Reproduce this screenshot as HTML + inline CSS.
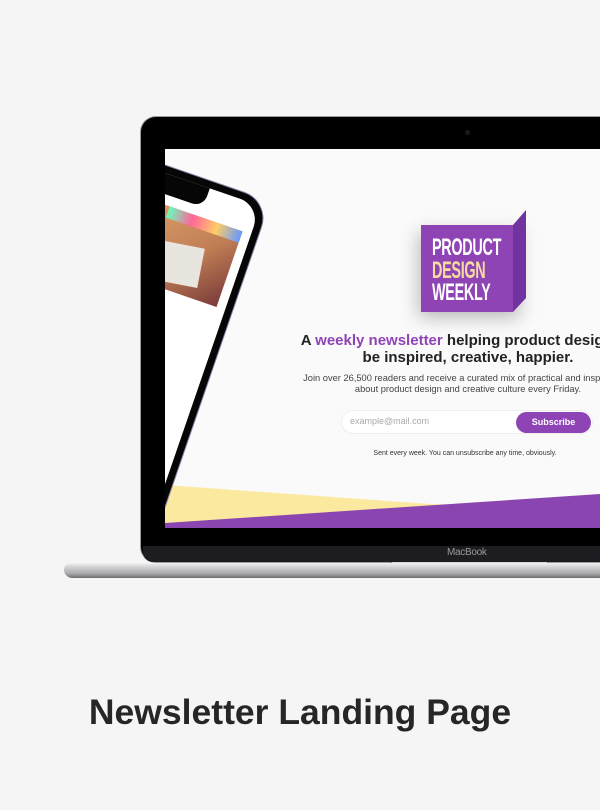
<!DOCTYPE html>
<html><head><meta charset="utf-8">
<style>
html,body{margin:0;width:600px;height:810px;overflow:hidden}
body{background:#f5f5f5;position:relative;font-family:"Liberation Sans",sans-serif}
#wrap{position:absolute;left:0;top:0;width:600px;height:810px;overflow:hidden}
.abs{position:absolute}
#lid{left:140px;top:116px;width:460px;height:447px;background:#000;border-radius:16px 0 0 16px;border:1px solid #9a9aa0;border-right:none;box-sizing:border-box}
#strip{left:143px;top:546px;width:457px;height:16px;background:#1d1c20;border-radius:0 0 0 10px}
#screen{left:165px;top:149px;width:435px;height:379px;background:#fafafa;overflow:hidden}
#base{left:64px;top:563px;width:536px;height:15px;background:linear-gradient(#f2f2f2,#cfcfd1 30%,#a9a9ab 70%,#6e6e70);border-radius:8px 0 0 10px}
.c{text-align:center;left:0;width:606px}
</style></head><body><div id="wrap">
<div id="lid" class="abs"></div>
<div class="abs" style="left:465px;top:130px;width:5px;height:5px;border-radius:50%;background:#1a1a1a"></div>
<div id="strip" class="abs"></div>
<div class="abs" style="left:447px;top:547px;font-size:10px;color:#9a9a9e;letter-spacing:-0.3px">MacBook</div>
<div class="abs" style="left:390px;top:562px;width:155px;height:5px;background:#d8d8da;border-left:2px solid #888;border-right:2px solid #888"></div>
<div id="base" class="abs"></div>
<div id="screen" class="abs">
  <svg class="abs" style="left:0;top:0" width="435" height="379">
    <polygon points="0,336 265,355 435,360 0,379" fill="#fbe9a0"/>
    <polygon points="0,374 435,345 435,379 0,379" fill="#8a45b0"/>
  </svg>
  <div class="abs" style="left:-114px;top:52px;width:220px;height:470px;transform-origin:top right;transform:rotate(19deg);background:#060606;border-radius:28px;border:1.5px solid #8a83a8;box-sizing:border-box;overflow:hidden">
    <div class="abs" style="left:7px;top:7px;right:7px;bottom:7px;background:#fff;border-radius:22px;overflow:hidden">
      <div class="abs" style="left:40px;top:-2px;width:110px;height:22px;background:#060606;border-radius:0 0 12px 12px"></div>
      <div class="abs" style="left:80px;top:30px;width:115px;height:80px;background:linear-gradient(135deg,#e3a36b,#c07e55 60%,#7a3a3a)"></div>
      <div class="abs" style="left:118px;top:62px;width:50px;height:40px;background:#e8e4de;transform:rotate(-8deg)"></div>
      <div class="abs" style="left:118px;top:30px;width:77px;height:12px;background:linear-gradient(90deg,#6fb,#f69,#fc6,#69f)"></div>
      <div class="abs" style="left:82px;top:118px;font-size:9px;font-weight:bold;color:#222;white-space:nowrap">try are coming</div>
      <div class="abs" style="left:82px;top:150px;font-size:7px;color:#333;line-height:9px">ing will save<br>g design</div>
      <div class="abs" style="left:60px;top:180px;width:80px;height:1px;background:#e5e5e5"></div>
      <div class="abs" style="left:78px;top:200px;font-size:7px;color:#333;line-height:9px">you<br>work</div>
      <div class="abs" style="left:60px;top:230px;width:80px;height:1px;background:#e5e5e5"></div>
      <div class="abs" style="left:78px;top:248px;font-size:7px;color:#333">of</div>
    </div>
  </div>
  <svg class="abs" style="left:246px;top:50px;overflow:visible" width="130" height="130">
    <defs><filter id="sh" x="-50%" y="-50%" width="200%" height="200%"><feGaussianBlur stdDeviation="9"/></filter></defs>
    <rect x="8" y="34" width="100" height="84" fill="rgba(0,0,0,.28)" filter="url(#sh)"/>
    <polygon points="102,26 115,11 115,99 102,113" fill="#7133a0"/>
    <rect x="10" y="26" width="92" height="87" fill="#8e44b5"/>
  </svg>
  <div class="abs" style="left:267px;top:88px;font-weight:bold;font-size:24px;line-height:22.5px;transform:scaleX(0.6);transform-origin:left top;color:#fff;white-space:nowrap;letter-spacing:-0.5px">PRODUCT<br><span style="color:#f6dba0">DESIGN</span><br>WEEKLY</div>
  <div class="abs c" style="top:183px;font-size:15px;font-weight:bold;color:#222;line-height:17px">A <span style="color:#8e44b5">weekly newsletter</span> helping product designers<br>be inspired, creative, happier.</div>
  <div class="abs c" style="top:224px;font-size:9.3px;color:#444;line-height:11px">Join over 26,500 readers and receive a curated mix of practical and inspirational<br>about product design and creative culture every Friday.</div>
  <div class="abs" style="left:176px;top:261px;width:252px;height:24px;border-radius:12px;background:#fff;border:1px solid #eee;box-sizing:border-box"></div>
  <div class="abs" style="left:185px;top:267px;font-size:9px;color:#aaa">example@mail.com</div>
  <div class="abs" style="left:351px;top:263px;width:75px;height:21px;border-radius:11px;background:#8e44b5;color:#fff;font-size:9px;font-weight:bold;text-align:center;line-height:21px">Subscribe</div>
  <div class="abs" style="left:-3px;width:606px;text-align:center;top:301px;font-size:7px;color:#333">Sent every week. You can unsubscribe any time, obviously.</div>
</div>
<div class="abs" style="left:0;width:600px;top:692px;text-align:center;font-size:35.5px;font-weight:bold;color:#262626">Newsletter Landing Page</div>
</div></body></html>
